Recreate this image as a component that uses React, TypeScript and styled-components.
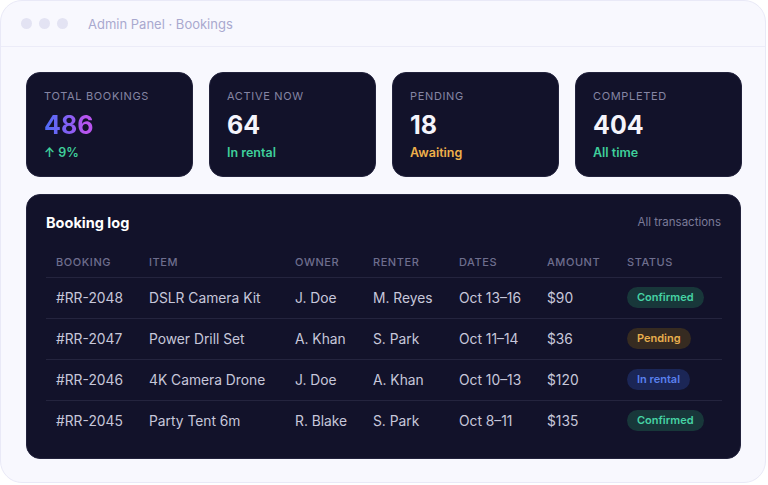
import styled, { createGlobalStyle } from "styled-components";

const GlobalStyle = createGlobalStyle`
  html, body {
    margin: 0;
    padding: 0;
    background: #ffffff;
  }
  body {
    font-family: Inter, "Noto Sans", "Liberation Sans", sans-serif;
    -webkit-font-smoothing: antialiased;
  }
`;

const Window = styled.div`
  box-sizing: border-box;
  width: 766px;
  height: 483px;
  background: #f8f8fe;
  border: 1px solid #e9e9f7;
  border-radius: 22px;
  overflow: hidden;
  display: flex;
  flex-direction: column;
`;

const TitleBar = styled.div`
  height: 45px;
  flex-shrink: 0;
  display: flex;
  align-items: center;
  padding-left: 20px;
  border-bottom: 1px solid #ececf8;
`;

const Dots = styled.div`
  display: flex;
  gap: 7px;
  margin-right: 20px;
`;

const Dot = styled.span`
  width: 11px;
  height: 11px;
  border-radius: 50%;
  background: #e3e3f3;
`;

const WindowTitle = styled.span`
  font-size: 13px;
  color: #a9a9cf;
`;

const Content = styled.div`
  padding: 25px 24px 0 25px;
  display: flex;
  flex-direction: column;
  gap: 17px;
`;

const StatGrid = styled.div`
  display: grid;
  grid-template-columns: repeat(4, 167px);
  gap: 16px;
`;

const StatCard = styled.div`
  box-sizing: border-box;
  height: 105px;
  background: #12122a;
  border: 1px solid #22223c;
  border-radius: 14px;
  padding: 16px 17px;
  display: flex;
  flex-direction: column;
`;

const StatLabel = styled.div`
  font-size: 11px;
  line-height: 14px;
  letter-spacing: 0.06em;
  text-transform: uppercase;
  color: #8585a3;
`;

const StatValue = styled.div<{ $gradient?: boolean }>`
  margin-top: 7px;
  font-size: 25px;
  line-height: 30px;
  font-weight: 700;
  color: #f4f4fb;
  ${(p) =>
    p.$gradient &&
    `
    background: linear-gradient(90deg, #4d6cf6 0%, #8460f4 50%, #b854ee 85%);
    -webkit-background-clip: text;
    background-clip: text;
    color: transparent;
    width: fit-content;
  `}
`;

const StatNote = styled.div<{ $tone: "green" | "amber" }>`
  margin-top: 5px;
  font-size: 12.5px;
  line-height: 16px;
  font-weight: 600;
  color: ${(p) => (p.$tone === "amber" ? "#eeb04b" : "#3fcf9b")};
`;

const Panel = styled.div`
  box-sizing: border-box;
  height: 265px;
  background: #12122a;
  border: 1px solid #22223c;
  border-radius: 14px;
  padding: 16px 19px 0 19px;
`;

const PanelHeader = styled.div`
  display: flex;
  align-items: center;
  justify-content: space-between;
  height: 22px;
`;

const PanelTitle = styled.h2`
  margin: 0;
  font-size: 14.5px;
  font-weight: 700;
  color: #ffffff;
`;

const PanelLink = styled.span`
  font-size: 11.5px;
  color: #7b7b99;
`;

const Table = styled.table`
  width: 676px;
  margin-top: 14px;
  border-collapse: collapse;
  table-layout: fixed;
`;

const Th = styled.th`
  height: 30px;
  padding: 8px 0 0 10px;
  box-sizing: border-box;
  text-align: left;
  vertical-align: top;
  font-size: 11px;
  font-weight: 500;
  letter-spacing: 0.05em;
  line-height: 14px;
  text-transform: uppercase;
  color: #6e6e8e;
`;

const Tr = styled.tr`
  border-top: 1px solid #24243e;
`;

const Td = styled.td`
  height: 40px;
  padding: 0 0 0 10px;
  font-size: 13.8px;
  color: #c7c7da;
  white-space: nowrap;
  vertical-align: middle;
`;

type Status = "Confirmed" | "Pending" | "In rental";

const badgeColors: Record<Status, { bg: string; fg: string }> = {
  Confirmed: { bg: "#18373a", fg: "#46d3a4" },
  Pending: { bg: "#362b21", fg: "#e8ae4d" },
  "In rental": { bg: "#1b2656", fg: "#5a80ee" },
};

const Badge = styled.span<{ $status: Status }>`
  display: inline-block;
  padding: 0 10px;
  height: 21px;
  line-height: 21px;
  border-radius: 11px;
  font-size: 11px;
  font-weight: 600;
  background: ${(p) => badgeColors[p.$status].bg};
  color: ${(p) => badgeColors[p.$status].fg};
`;

const stats = [
  { label: "Total bookings", value: "486", note: "↑ 9%", tone: "green" as const, gradient: true },
  { label: "Active now", value: "64", note: "In rental", tone: "green" as const },
  { label: "Pending", value: "18", note: "Awaiting", tone: "amber" as const },
  { label: "Completed", value: "404", note: "All time", tone: "green" as const },
];

const columns = [
  { title: "Booking", width: 93 },
  { title: "Item", width: 146 },
  { title: "Owner", width: 78 },
  { title: "Renter", width: 86 },
  { title: "Dates", width: 88 },
  { title: "Amount", width: 80 },
  { title: "Status", width: 105 },
];

const bookings: {
  id: string;
  item: string;
  owner: string;
  renter: string;
  dates: string;
  amount: string;
  status: Status;
}[] = [
  { id: "#RR-2048", item: "DSLR Camera Kit", owner: "J. Doe", renter: "M. Reyes", dates: "Oct 13–16", amount: "$90", status: "Confirmed" },
  { id: "#RR-2047", item: "Power Drill Set", owner: "A. Khan", renter: "S. Park", dates: "Oct 11–14", amount: "$36", status: "Pending" },
  { id: "#RR-2046", item: "4K Camera Drone", owner: "J. Doe", renter: "A. Khan", dates: "Oct 10–13", amount: "$120", status: "In rental" },
  { id: "#RR-2045", item: "Party Tent 6m", owner: "R. Blake", renter: "S. Park", dates: "Oct 8–11", amount: "$135", status: "Confirmed" },
];

export default function App() {
  return (
    <>
      <GlobalStyle />
      <Window>
        <TitleBar>
          <Dots>
            <Dot />
            <Dot />
            <Dot />
          </Dots>
          <WindowTitle>Admin Panel · Bookings</WindowTitle>
        </TitleBar>

        <Content>
          <StatGrid>
            {stats.map((s) => (
              <StatCard key={s.label}>
                <StatLabel>{s.label}</StatLabel>
                <StatValue $gradient={s.gradient}>{s.value}</StatValue>
                <StatNote $tone={s.tone}>{s.note}</StatNote>
              </StatCard>
            ))}
          </StatGrid>

          <Panel>
            <PanelHeader>
              <PanelTitle>Booking log</PanelTitle>
              <PanelLink>All transactions</PanelLink>
            </PanelHeader>
            <Table>
              <colgroup>
                {columns.map((c) => (
                  <col key={c.title} style={{ width: c.width }} />
                ))}
              </colgroup>
              <thead>
                <tr>
                  {columns.map((c) => (
                    <Th key={c.title}>{c.title}</Th>
                  ))}
                </tr>
              </thead>
              <tbody>
                {bookings.map((b) => (
                  <Tr key={b.id}>
                    <Td>{b.id}</Td>
                    <Td>{b.item}</Td>
                    <Td>{b.owner}</Td>
                    <Td>{b.renter}</Td>
                    <Td>{b.dates}</Td>
                    <Td>{b.amount}</Td>
                    <Td>
                      <Badge $status={b.status}>{b.status}</Badge>
                    </Td>
                  </Tr>
                ))}
              </tbody>
            </Table>
          </Panel>
        </Content>
      </Window>
    </>
  );
}
